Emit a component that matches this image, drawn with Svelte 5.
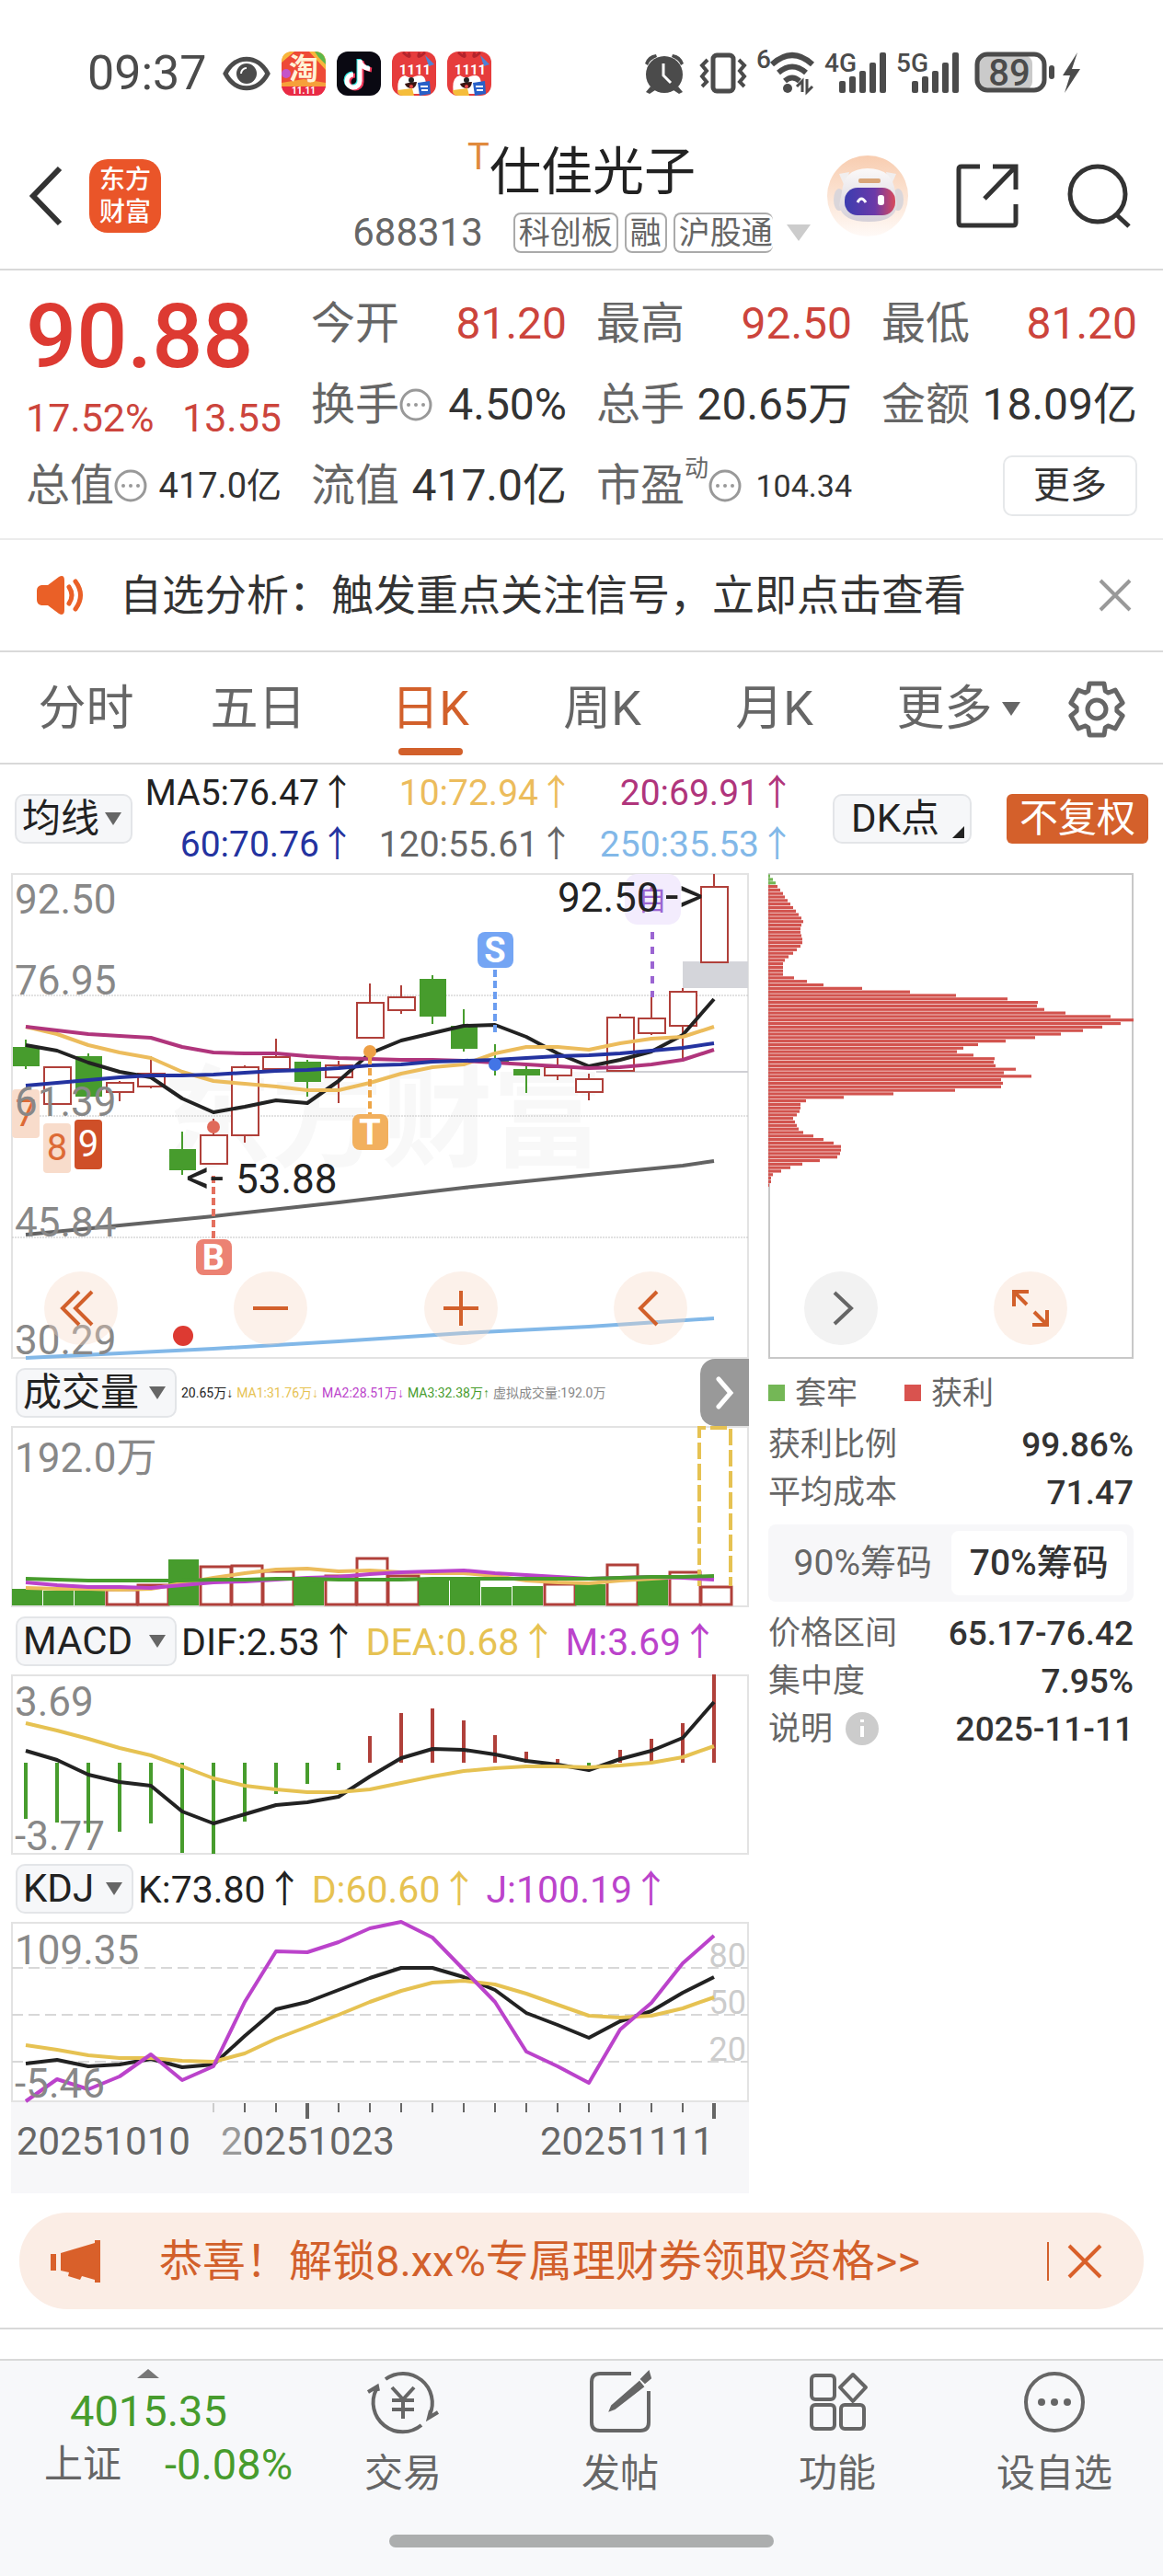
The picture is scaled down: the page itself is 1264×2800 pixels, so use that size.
<script>
    const tabs = ['分时', '五日', '日K', '周K', '月K']
    let activeTab = '日K'
    let chips = '70'

    const averages = [
        { text: 'MA5:76.47', color: '#222' },
        { text: '10:72.94', color: '#ecbc5c' },
        { text: '20:69.91', color: '#b0357c' },
        { text: '60:70.76', color: '#2433a0' },
        { text: '120:55.61', color: '#666' },
        { text: '250:35.53', color: '#82b8e8' }
    ]

    const volumeLegend = [
        { text: '20.65万↓', color: '#222' },
        { text: 'MA1:31.76万↓', color: '#e6c252' },
        { text: 'MA2:28.51万↓', color: '#bb43cb' },
        { text: 'MA3:32.38万↑', color: '#479c2d' },
        { text: '虚拟成交量:192.0万', color: '#888' }
    ]

    const macdLegend = [
        { text: 'DIF:2.53', color: '#222' },
        { text: 'DEA:0.68', color: '#e6c252' },
        { text: 'M:3.69', color: '#bb43cb' }
    ]

    const kdjLegend = [
        { text: 'K:73.80', color: '#222' },
        { text: 'D:60.60', color: '#e6c252' },
        { text: 'J:100.19', color: '#bb43cb' }
    ]

    // up, body top, body bottom, high, low
    const candles = [
        [0, 1138, 1159, 1130, 1162], [1, 1160, 1200, 1160, 1200], [0, 1148, 1192, 1145, 1192],
        [1, 1177, 1187, 1175, 1197], [1, 1167, 1181, 1148, 1183], [0, 1249, 1272, 1230, 1277],
        [1, 1234, 1265, 1216, 1265], [1, 1160, 1234, 1158, 1242], [1, 1149, 1162, 1129, 1162],
        [0, 1154, 1176, 1152, 1192], [1, 1158, 1171, 1153, 1199], [1, 1090, 1128, 1069, 1128],
        [1, 1084, 1098, 1071, 1102], [0, 1064, 1105, 1060, 1113], [0, 1115, 1140, 1097, 1143],
        [0, 1152, 1154, 1135, 1169], [0, 1162, 1169, 1158, 1188], [1, 1160, 1169, 1148, 1174],
        [1, 1173, 1187, 1167, 1196], [1, 1106, 1164, 1102, 1164], [1, 1107, 1123, 1084, 1125],
        [1, 1078, 1115, 1074, 1153], [1, 964, 1046, 950, 1046]
    ]

    const ma5 = [1136, 1142, 1155, 1165, 1171, 1194, 1209, 1203, 1196, 1199, 1175, 1145, 1131, 1123, 1115, 1114, 1127, 1145, 1159, 1152, 1143, 1125, 1086]
    const ma10 = [1116, 1124, 1136, 1144, 1150, 1165, 1175, 1178, 1181, 1185, 1185, 1177, 1167, 1160, 1157, 1145, 1138, 1138, 1141, 1134, 1129, 1127, 1116]
    const ma20 = [1116, 1120, 1124, 1126, 1128, 1138, 1144, 1145, 1145, 1148, 1150, 1151, 1152, 1152, 1153, 1155, 1157, 1159, 1161, 1160, 1157, 1152, 1141]
    const ma60 = [1180, 1177, 1174, 1171, 1169, 1169, 1168, 1166, 1164, 1163, 1161, 1158, 1157, 1154, 1153, 1152, 1150, 1148, 1147, 1145, 1142, 1139, 1134]

    const volumes = [
        [0, 1726], [0, 1728], [0, 1728], [1, 1727], [1, 1722], [0, 1694], [1, 1702], [1, 1701],
        [1, 1707], [0, 1716], [1, 1712], [1, 1693], [1, 1712], [0, 1715], [0, 1715], [0, 1724],
        [0, 1723], [1, 1721], [0, 1721], [1, 1700], [0, 1715], [1, 1708], [1, 1724]
    ]
    const vol1 = [1725, 1726, 1726, 1727, 1726, 1720, 1714, 1709, 1705, 1704, 1707, 1706, 1708, 1709, 1709, 1712, 1717, 1719, 1720, 1717, 1715, 1713, 1714]
    const vol2 = [1719, 1722, 1724, 1724, 1725, 1722, 1719, 1718, 1716, 1714, 1713, 1710, 1708, 1707, 1706, 1709, 1711, 1713, 1715, 1714, 1713, 1714, 1716]
    const vol3 = [1715, 1716, 1717, 1717, 1717, 1717, 1716, 1716, 1715, 1715, 1716, 1716, 1716, 1715, 1715, 1715, 1715, 1715, 1715, 1714, 1713, 1713, 1712]

    const macd = [1976, 1980, 1991, 1990, 1981, 2013, 2014, 1979, 1949, 1938, 1923, 1886, 1861, 1856, 1869, 1885, 1903, 1911, 1921, 1901, 1889, 1872, 1819]
    const dif = [1902, 1912, 1928, 1936, 1940, 1968, 1981, 1971, 1961, 1958, 1952, 1930, 1910, 1900, 1901, 1906, 1913, 1917, 1923, 1911, 1902, 1888, 1849]
    const dea = [1872, 1880, 1889, 1899, 1907, 1919, 1932, 1940, 1944, 1947, 1947, 1944, 1937, 1930, 1924, 1921, 1919, 1919, 1920, 1918, 1915, 1909, 1897]

    const kLine = [2242, 2238, 2245, 2243, 2237, 2246, 2243, 2212, 2183, 2175, 2162, 2149, 2138, 2138, 2148, 2162, 2187, 2200, 2214, 2196, 2185, 2165, 2148]
    const dLine = [2222, 2227, 2233, 2236, 2236, 2239, 2240, 2231, 2215, 2202, 2189, 2175, 2163, 2154, 2152, 2156, 2166, 2178, 2190, 2192, 2190, 2182, 2170]
    const jLine = [2283, 2259, 2270, 2256, 2232, 2260, 2245, 2175, 2120, 2121, 2110, 2095, 2088, 2105, 2140, 2175, 2229, 2245, 2263, 2205, 2176, 2133, 2103]

    const chipBars = [
        2, 5, 8, 10, 13, 16, 18, 21, 24, 27, 30, 33, 36, 38, 36, 35, 35, 36, 37, 37, 35, 31, 27, 22, 18, 16, 16, 16, 16, 28,
        42, 60, 102, 154, 204, 260, 293, 292, 300, 323, 372, 397, 383, 363, 342, 318, 290, 258, 228, 212, 205, 223, 246, 245,
        247, 269, 256, 286, 253, 255, 253, 203, 136, 82, 41, 35, 35, 34, 31, 27, 29, 31, 33, 38, 49, 60, 71, 79, 79, 78, 75,
        56, 37, 24, 14, 5, 3, 3, 1
    ]

    const ticks = Array.from({ length: 17 }, (_, i) => i + 6)

    const x = (i) => 28 + 34 * i
    const line = (ys) => ys.map((y, i) => `${x(i)},${y}`).join(' ')

    const gear = Array.from({ length: 6 }, (_, k) => k * 60 - 90)
        .flatMap((a) => [[a - 25, 22], [a - 16, 29], [a + 16, 29], [a + 25, 22]])
        .map(([a, r]) => `${(r * Math.cos((a * Math.PI) / 180)).toFixed(1)},${(r * Math.sin((a * Math.PI) / 180)).toFixed(1)}`)
        .join(' ')
</script>

<main>
    <div class="status">
        <div class="status-left">
            <time>09:37</time>
            <svg width="52" height="38" viewBox="0 0 52 38">
                <path d="M3 19C14-2 38-2 49 19C38 40 14 40 3 19Z" fill="none" stroke="#4b4b4b" stroke-width="5" />
                <circle cx="26" cy="19" r="11" fill="#4b4b4b" />
                <path d="M20 19a6 6 0 0 1 6-6" fill="none" stroke="#fff" stroke-width="2" />
            </svg>
            <svg width="48" height="48" viewBox="0 0 48 48">
                <rect width="48" height="48" rx="12" fill="#ee4a36" />
                <path d="M0 12L14 0H12Q0 0 0 12ZM30 0H36Q48 0 48 12V20Z" fill="#f8b63b" />
                <path d="M36 0Q48 0 48 14L40 6Z" fill="#5cb84a" />
                <circle cx="5" cy="24" r="5" fill="#c453c9" />
                <path d="M0 34L24 30L48 34V38H0Z" fill="#f6a03a" />
                <path d="M0 38H48Q46 48 36 48H12Q2 48 0 38Z" fill="#e92a45" />
                <text class="tao" x="24" y="30">淘</text>
                <text class="tiny" x="24" y="46">11.11</text>
            </svg>
            <svg width="48" height="48" viewBox="0 0 48 48">
                <rect width="48" height="48" rx="12" fill="#0a0912" />
                <g fill="none" stroke-width="5">
                    <path d="M24 8V31a7 7 0 1 1-7-7M24 9q2 8 11 9" stroke="#35e6e0" />
                    <path d="M27 10V33a7 7 0 1 1-7-7M27 11q2 8 11 9" stroke="#f2385a" />
                    <path d="M25 9V32a7 7 0 1 1-7-7M25 10q2 8 11 9" stroke="#fff" />
                </g>
            </svg>
            {#each [1, 2] as app (app)}
                <svg width="48" height="48" viewBox="0 0 48 48">
                    <rect width="48" height="48" rx="12" fill="#e63c3c" />
                    <path d="M12 1Q22 10 18 1M36 1Q26 10 30 1" stroke="#b3242c" stroke-width="3" fill="none" />
                    <path d="M36 4L46 14L40 16Z" fill="#4e83d6" />
                    <text class="eleven" x="25" y="25">1111</text>
                    <path d="M7 46Q4 28 14 26Q20 30 25 27Q34 24 36 30L40 46Z" fill="#fff" />
                    <path d="M14 35Q20 33 27 33Q26 41 20 40Q15 39 14 35Z" fill="#3a1512" />
                    <circle cx="21" cy="31" r="3" fill="#222" />
                    <circle cx="21" cy="38" r="2" fill="#e94949" />
                    <path d="M28 34L41 32L42 46L30 48Z" fill="#2860c8" />
                    <path d="M31 38h8M32 42h7" stroke="#fff" stroke-width="2" />
                    <path d="M6 42L22 40L24 48H12Q6 48 6 42Z" fill="#f5bd3b" />
                </svg>
            {/each}
        </div>
        <svg class="system" width="476" height="52" viewBox="699 54 476 52">
            <g fill="#4b4b4b">
                <circle cx="722" cy="81" r="20" />
                <path d="M701 69Q704 60 713 59L714 62Q706 65 704 71ZM743 69Q740 60 731 59L730 62Q738 65 740 71Z" />
                <path d="M707 94L712 98L706 102L702 100ZM737 94L732 98L738 102L742 100Z" />
                <path d="M721 69V82L729 90" fill="none" stroke="#fff" stroke-width="3" />
                <rect x="775" y="60" width="22" height="39" rx="4" fill="none" stroke="#4b4b4b" stroke-width="5" />
                <path d="M769 65l-6 6 5 6-5 6 5 6-5 5M803 65l6 6-5 6 5 6-5 6 5 5" fill="none" stroke="#4b4b4b" stroke-width="4" />
                <path d="M839 70Q861 50 883 70M846 79Q861 66 876 79M853 88Q861 81 869 88" fill="none" stroke="#4b4b4b" stroke-width="6" />
                <circle cx="856" cy="96" r="5" />
                <path d="M866 94l6-6v12M877 86v14l6-6" fill="none" stroke="#4b4b4b" stroke-width="3" />
                <text class="net" x="822" y="74">6</text>
                <text class="net" x="896" y="78">4G</text>
                <text class="net" x="974" y="78">5G</text>
                {#each [0, 79] as dx (dx)}
                    <rect x={912 + dx} y="88" width="7" height="13" rx="2" />
                    <rect x={923 + dx} y="83" width="7" height="18" rx="2" />
                    <rect x={934 + dx} y="77" width="7" height="24" rx="2" />
                    <rect x={945 + dx} y="68" width="7" height="33" rx="2" />
                    <rect x={956 + dx} y="57" width="7" height="44" rx="2" />
                {/each}
                <rect x="1062" y="60" width="60" height="38" rx="9" fill="#cacaca" />
                <rect x="1062" y="59" width="73" height="39" rx="11" fill="none" stroke="#4b4b4b" stroke-width="5" />
                <rect x="1140" y="71" width="6" height="15" rx="3" />
                <path d="M1171 57L1155 82H1163L1157 101L1174 75H1165Z" />
                <text class="battery" x="1097" y="93">89</text>
            </g>
        </svg>
    </div>

    <header>
        <div class="head-left">
            <button class="plain" aria-label="返回">
                <svg width="36" height="66" viewBox="0 0 36 66"><path d="M33 3L4 33L33 63" fill="none" stroke="#333" stroke-width="6" /></svg>
            </button>
            <a class="logo" href="#home">东方<br />财富</a>
        </div>
        <div class="title">
            <h1><sup>T</sup>仕佳光子</h1>
            <div class="codes">
                <span class="code">688313</span>
                <span class="tag">科创板</span>
                <span class="tag">融</span>
                <span class="tag open">沪股通</span>
                <svg width="26" height="18" viewBox="0 0 26 18"><path d="M0 0H26L13 18Z" fill="#ccc" /></svg>
            </div>
        </div>
        <div class="head-right">
            <button class="plain avatar" aria-label="智能助手">
                <svg width="88" height="88" viewBox="0 0 88 88">
                    <defs>
                        <linearGradient id="halo" x1="0" y1="0" x2="0" y2="1">
                            <stop offset="0" stop-color="#f8cdb0" />
                            <stop offset="1" stop-color="#fffaf7" />
                        </linearGradient>
                        <linearGradient id="visor" x1="0" y1="0" x2="1" y2="0">
                            <stop offset="0" stop-color="#3b3db0" />
                            <stop offset="0.6" stop-color="#6b3aa8" />
                            <stop offset="1" stop-color="#d84a5c" />
                        </linearGradient>
                        <linearGradient id="shell" x1="0" y1="0" x2="0" y2="1">
                            <stop offset="0" stop-color="#fbf9f9" />
                            <stop offset="1" stop-color="#d5d0d8" />
                        </linearGradient>
                    </defs>
                    <circle cx="44" cy="44" r="44" fill="url(#halo)" />
                    <path d="M13 20L24 18L20 36ZM75 20L64 18L68 36Z" fill="#f1eeee" />
                    <ellipse cx="13" cy="48" rx="6" ry="12" fill="#dad6da" />
                    <ellipse cx="77" cy="48" rx="6" ry="12" fill="#dad6da" />
                    <path d="M16 40Q18 14 44 14Q71 14 74 40L76 54Q74 72 45 72Q16 72 13 54Z" fill="url(#shell)" />
                    <rect x="34" y="25" width="24" height="5" rx="2" fill="#d9a679" />
                    <rect x="19" y="35" width="55" height="30" rx="14" fill="url(#visor)" />
                    <path d="M33 51q4-8 9 0" fill="none" stroke="#fff" stroke-width="3" />
                    <rect x="55" y="43" width="7" height="11" rx="3" fill="#fff" />
                </svg>
            </button>
            <button class="plain share" aria-label="分享">
                <svg width="68" height="70" viewBox="0 0 68 70" fill="none" stroke="#333" stroke-width="5">
                    <path d="M26 3H6Q3 3 3 6V64Q3 67 6 67H62Q65 67 65 64V44M31 38L64 4M40 3H65V28" />
                </svg>
            </button>
            <button class="plain" aria-label="搜索">
                <svg width="70" height="70" viewBox="0 0 70 70" fill="none" stroke="#333" stroke-width="5">
                    <circle cx="34" cy="33" r="30" />
                    <path d="M54 55L68 68" />
                </svg>
            </button>
        </div>
    </header>

    <section class="quote">
        <div class="last">
            <strong>90.88</strong>
            <div><span>17.52%</span><span>13.55</span></div>
        </div>
        <div class="cell"><span>今开</span><b class="red">81.20</b></div>
        <div class="cell"><span>最高</span><b class="red">92.50</b></div>
        <div class="cell"><span>最低</span><b class="red">81.20</b></div>
        <div class="cell"><span>换手{@render dots()}</span><b>4.50%</b></div>
        <div class="cell"><span>总手</span><b>20.65万</b></div>
        <div class="cell"><span>金额</span><b>18.09亿</b></div>
        <div class="cell"><span>总值{@render dots()}</span><b class="mid">417.0亿</b></div>
        <div class="cell"><span>流值</span><b>417.0亿</b></div>
        <div class="cell"><span>市盈<sup>动</sup>{@render dots()}</span><b class="small">104.34</b></div>
        <div class="cell end"><button class="more">更多</button></div>
    </section>

    <section class="notice">
        <svg width="54" height="44" viewBox="0 0 54 44">
            <path d="M0 17Q0 12 5 11H12L24 2Q30-1 30 6V38Q30 45 24 42L12 33H5Q0 32 0 27Z" fill="#ea6027" />
            <path d="M35 13Q41 22 35 31M42 7Q53 22 42 37" fill="none" stroke="#ea6027" stroke-width="5" stroke-linecap="round" />
        </svg>
        <a href="#signal">自选分析：触发重点关注信号，立即点击查看</a>
        <button class="plain" aria-label="关闭提醒">
            <svg width="36" height="36" viewBox="0 0 36 36"><path d="M2 2L34 34M34 2L2 34" stroke="#999" stroke-width="4" /></svg>
        </button>
    </section>

    <nav class="tabs">
        {#each tabs as tab (tab)}
            <button class:active={activeTab === tab} on:click={() => (activeTab = tab)}>{tab}</button>
        {/each}
        <button class="tab-more">更多<svg width="20" height="15" viewBox="0 0 20 15"><path d="M0 0H20L10 15Z" fill="#666" /></svg></button>
        <button aria-label="设置">
            <svg width="64" height="64" viewBox="-32 -32 64 64" fill="none" stroke="#666" stroke-width="5" stroke-linejoin="round">
                <polygon points={gear} />
                <circle r="10" />
            </svg>
        </button>
    </nav>

    <section class="averages">
        <label class="picker">
            <select aria-label="主图指标"><option>均线</option></select>
            {@render caret()}
        </label>
        <div class="values">
            {#each averages as item (item.text)}
                <span style:color={item.color}>{item.text}{@render up()}</span>
            {/each}
        </div>
        <button class="dk">DK点<svg width="13" height="13" viewBox="0 0 13 13"><path d="M13 0V13H0Z" fill="#222" /></svg></button>
        <button class="restore">不复权</button>
    </section>

    <div class="charts">
        <div class="left">
            <div class="plot">
                <svg viewBox="12 949 802 528">
                    <text class="watermark" x="175" y="1259">东方财富</text>
                    <rect class="frame" x="13" y="950" width="800" height="526" />
                    <g stroke="#c4c4c4" stroke-width="1" stroke-dasharray="2 1">
                        <path d="M13 1082H813M13 1213H813M13 1345H813" />
                    </g>
                    <path d="M648 1165H813" stroke="#cfcfd4" stroke-width="2" />
                    <rect x="742" y="1045" width="71" height="29" fill="#d4d5da" />
                    {#each candles as [rise, top, bottom, high, low], i (i)}
                        {#if rise}
                            <path d="M{x(i)} {high}V{top}M{x(i)} {bottom}V{low}" stroke="#b0403a" stroke-width="2" />
                            <rect x={x(i) - 14} y={top} width="29" height={bottom - top} fill="#fff" stroke="#b0403a" stroke-width="2" />
                        {:else}
                            <path d="M{x(i)} {high}V{low}" stroke="#479c2d" stroke-width="2" />
                            <rect x={x(i) - 14} y={top} width="29" height={bottom - top} fill="#479c2d" />
                        {/if}
                    {/each}
                    <rect x="13" y="1184" width="30" height="53" rx="4" fill="#f8dccb" />
                    <rect x="47" y="1221" width="30" height="54" rx="4" fill="#f8dccb" />
                    <rect x="81" y="1217" width="30" height="54" rx="4" fill="#cf4f28" />
                    <text class="nine" x="28" y="1224" fill="#dd6a35">7</text>
                    <text class="nine" x="62" y="1261" fill="#dd6a35">8</text>
                    <text class="nine" x="96" y="1257" fill="#fff">9</text>
                    <g class="lines">
                        <polyline points="28,1342 130,1332 232,1322 368,1307 504,1291 640,1277 742,1267 776,1262" stroke="#636363" />
                        <polyline points="28,1476 232,1466 368,1458 504,1449 640,1442 776,1433" stroke="#82b8e8" />
                        <polyline points={line(ma5)} stroke="#222" />
                        <polyline points={line(ma10)} stroke="#ecbc5c" />
                        <polyline points={line(ma20)} stroke="#b0357c" />
                        <polyline points={line(ma60)} stroke="#2433a0" />
                    </g>
                    <g stroke-width="4" stroke-dasharray="8 4">
                        <path d="M232 1278V1346" stroke="#e4705f" />
                        <path d="M402 1149V1211" stroke="#eda546" />
                        <path d="M538 1054V1122" stroke="#6b9df0" />
                        <path d="M709 1013V1084" stroke="#9b65d2" stroke-dasharray="8 8" />
                    </g>
                    <circle cx="232" cy="1225" r="7" fill="#e06a5a" />
                    <circle cx="402" cy="1143" r="7" fill="#eea046" />
                    <circle cx="538" cy="1157" r="7" fill="#4375e6" />
                    <rect x="213" y="1347" width="39" height="39" rx="8" fill="#ec8273" />
                    <rect x="383" y="1211" width="39" height="39" rx="8" fill="#f2b05e" />
                    <rect x="519" y="1013" width="39" height="39" rx="8" fill="#74a5f4" />
                    <rect x="679" y="950" width="61" height="55" rx="14" fill="#f3ecfd" />
                    <text class="signal" x="232" y="1380">B</text>
                    <text class="signal" x="402" y="1244">T</text>
                    <text class="signal" x="538" y="1046">S</text>
                    <text class="self" x="709" y="989">自</text>
                    <g class="axis">
                        <text x="16" y="993">92.50</text>
                        <text x="16" y="1081">76.95</text>
                        <text x="16" y="1213">61.39</text>
                        <text x="16" y="1344">45.84</text>
                        <text x="16" y="1472">30.29</text>
                        <g fill="#222">
                            <text x="606" y="991">92.50<tspan class="arrow" x="723">-&gt;</tspan></text>
                            <text x="202" y="1297"><tspan class="arrow">&lt;-</tspan><tspan x="256">53.88</tspan></text>
                        </g>
                    </g>
                    <circle cx="199" cy="1452" r="11" fill="#dd3a32" />
                </svg>
                <div class="controls">
                    <button aria-label="最早"><svg viewBox="-40 -40 80 80"><path d="M-2-18L-20 0L-2 18M12-18L-6 0L12 18" /></svg></button>
                    <button aria-label="缩小"><svg viewBox="-40 -40 80 80"><path d="M-19 0H19" /></svg></button>
                    <button aria-label="放大"><svg viewBox="-40 -40 80 80"><path d="M-19 0H19M0-19V19" /></svg></button>
                    <button aria-label="前移"><svg viewBox="-40 -40 80 80"><path d="M7-18L-11 0L7 18" /></svg></button>
                </div>
            </div>

            <div class="legend-row">
                <label class="picker wide">
                    <select aria-label="副图一"><option>成交量</option></select>
                    {@render caret()}
                </label>
                <div class="volume-legend">
                    {#each volumeLegend as item (item.text)}
                        <span style:color={item.color}>{item.text}</span>
                    {/each}
                </div>
                <button class="drawer" aria-label="展开">
                    <svg width="20" height="36" viewBox="0 0 20 36"><path d="M3 3L16 18L3 33" fill="none" stroke="#fff" stroke-width="5" stroke-linecap="round" /></svg>
                </button>
            </div>
            <svg viewBox="12 1549 802 197">
                <rect class="frame" x="13" y="1550" width="800" height="195" />
                {#each volumes as [rise, top], i (i)}
                    {#if rise}
                        <rect x={x(i) - 14} y={top} width="33" height={1743 - top} fill="#fff" stroke="#b0403a" stroke-width="3" />
                    {:else}
                        <rect x={x(i) - 15} y={top} width="33" height={1744 - top} fill="#479c2d" />
                    {/if}
                {/each}
                <path d="M760 1723V1551H794V1723" fill="none" stroke="#e6c252" stroke-width="4" stroke-dasharray="18 5" />
                <g class="lines">
                    <polyline points={line(vol1)} stroke="#ecbc5c" />
                    <polyline points={line(vol2)} stroke="#bb43cb" />
                    <polyline points={line(vol3)} stroke="#479c2d" />
                </g>
                <text class="axis" x="16" y="1599">192.0万</text>
            </svg>

            <div class="legend-row">
                <label class="picker wide">
                    <select aria-label="副图二"><option>MACD</option></select>
                    {@render caret()}
                </label>
                <div class="legend">
                    {#each macdLegend as item (item.text)}
                        <span style:color={item.color}>{item.text}{@render up()}</span>
                    {/each}
                </div>
            </div>
            <svg viewBox="12 1819 802 196">
                <rect class="frame" x="13" y="1820" width="800" height="194" />
                <g class="axis">
                    <text x="16" y="1864">3.69</text>
                    <text x="16" y="2010">-3.77</text>
                </g>
                {#each macd as y, i (i)}
                    <path d="M{x(i)} 1915V{y}" stroke={y > 1915 ? '#479c2d' : '#b0403a'} stroke-width="4" />
                {/each}
                <g class="lines">
                    <polyline points={line(dif)} stroke="#222" />
                    <polyline points={line(dea)} stroke="#e6c252" />
                </g>
            </svg>

            <div class="legend-row">
                <label class="picker">
                    <select aria-label="副图三"><option>KDJ</option></select>
                    {@render caret()}
                </label>
                <div class="legend">
                    {#each kdjLegend as item (item.text)}
                        <span style:color={item.color}>{item.text}{@render up()}</span>
                    {/each}
                </div>
            </div>
            <svg viewBox="12 2088 802 295">
                <rect x="12" y="2284" width="802" height="99" fill="#f7f7f9" />
                <rect class="frame" x="13" y="2089" width="800" height="194" />
                <path d="M13 2138H813M13 2189H813M13 2240H813" stroke="#d8d8d8" stroke-width="2" stroke-dasharray="12 6" />
                <g class="scale">
                    <text x="811" y="2137">80</text>
                    <text x="811" y="2188">50</text>
                    <text x="811" y="2239">20</text>
                </g>
                <g class="lines">
                    <polyline points={line(kLine)} stroke="#222" />
                    <polyline points={line(dLine)} stroke="#e6c252" />
                    <polyline points={line(jLine)} stroke="#bb43cb" />
                </g>
                <g class="axis">
                    <text x="16" y="2134">109.35</text>
                    <text x="16" y="2279">-5.46</text>
                </g>
                {#each ticks as i (i)}
                    <path d="M{x(i)} 2285V{i === 9 || i === 22 ? 2302 : 2295}" stroke={i === 6 ? '#ccc' : '#666'} stroke-width={i === 9 || i === 22 ? 4 : 2} />
                {/each}
                <g class="dates">
                    <text x="18" y="2341">20251010</text>
                    <text x="240" y="2341"><tspan fill="#999">2</tspan>0251023</text>
                    <text x="587" y="2341">20251111</text>
                </g>
            </svg>
        </div>

        <div class="right">
            <div class="plot">
                <svg viewBox="834 949 397 528">
                    <rect x="835" y="950" width="395" height="526" fill="#fff" stroke="#c8c8c8" stroke-width="2" />
                    {#each chipBars as width, i (i)}
                        <rect x="834" y={950.5 + i * 3.82} {width} height="3.2" fill={i < 3 ? '#74b756' : '#d2534e'} />
                    {/each}
                </svg>
                <div class="controls side">
                    <button class="gray" aria-label="收起"><svg viewBox="-40 -40 80 80"><path d="M-7-17L11 0L-7 17" /></svg></button>
                    <button aria-label="全屏"><svg viewBox="-40 -40 80 80"><path d="M-18-2V-18H-2M-18-18L-4-4M18 2V18H2M18 18L4 4" /></svg></button>
                </div>
            </div>
            <div class="chip-legend">
                <span class="green">套牢</span>
                <span>获利</span>
            </div>
            <dl>
                <div><dt>获利比例</dt><dd>99.86%</dd></div>
                <div><dt>平均成本</dt><dd>71.47</dd></div>
            </dl>
            <div class="segment">
                <button class:selected={chips === '90'} on:click={() => (chips = '90')}>90%筹码</button>
                <button class:selected={chips === '70'} on:click={() => (chips = '70')}>70%筹码</button>
            </div>
            <dl>
                <div><dt>价格区间</dt><dd>65.17-76.42</dd></div>
                <div><dt>集中度</dt><dd>7.95%</dd></div>
                <div>
                    <dt>
                        说明
                        <svg width="36" height="36" viewBox="0 0 36 36">
                            <circle cx="18" cy="18" r="18" fill="#ccc" />
                            <path d="M18 15V27M18 8V11" stroke="#fff" stroke-width="4" />
                        </svg>
                    </dt>
                    <dd>2025-11-11</dd>
                </div>
            </dl>
        </div>
    </div>

    <aside class="banner">
        <svg width="54" height="46" viewBox="0 0 54 46" fill="#d9602a">
            <rect y="15" width="6" height="18" />
            <path d="M11 14L48 3V0H54V46H48V43L34 39L32 43L19 39L20 35L11 33Z" />
        </svg>
        <a href="#coupon">恭喜！解锁8.xx%专属理财券领取资格&gt;&gt;</a>
        <button class="plain" aria-label="关闭横幅">
            <svg width="38" height="38" viewBox="0 0 38 38"><path d="M2 2L36 36M36 2L2 36" stroke="#d9602a" stroke-width="4" /></svg>
        </button>
    </aside>

    <footer>
        <div class="bottom-nav">
            <a class="index" href="#index">
                <svg width="24" height="10" viewBox="0 0 24 10"><path d="M12 0L24 10H0Z" fill="#777" /></svg>
                <strong>4015.35</strong>
                <span>上证<em>-0.08%</em></span>
            </a>
            <a href="#trade">
                <svg width="80" height="70" viewBox="-40 -35 80 70" fill="none" stroke="#666" stroke-width="4">
                    <path d="M-19-25A32 32 0 0 1 29 14M20 25A32 32 0 0 1-29-14M-38-11L-28-17L-27-12M38 11L28 17L30 9" />
                    <path d="M-12-16L0-3L12-16M0-3V18M-12-2H12M-12 8H12" />
                </svg>
                交易
            </a>
            <a href="#post">
                <svg width="68" height="70" viewBox="-34 -35 68 70" fill="none" stroke="#666" stroke-width="4">
                    <path d="M12-31H-22Q-31-31-31-22V22Q-31 31-22 31H22Q31 31 31 22V-12" />
                    <path d="M31-33L33-26L27-21L23-25ZM21-22L25-17L-6 7L-11 9L-9 4Z" fill="#666" stroke-width="2" />
                </svg>
                发帖
            </a>
            <a href="#tools">
                <svg width="68" height="70" viewBox="-34 -35 68 70" fill="none" stroke="#666" stroke-width="4">
                    <rect x="-28" y="-29" width="25" height="26" rx="4" />
                    <rect x="-28" y="3" width="25" height="26" rx="4" />
                    <rect x="4" y="3" width="25" height="26" rx="4" />
                    <path d="M17-30L31-16L17-1L3-16Z" stroke-linejoin="round" />
                </svg>
                功能
            </a>
            <a href="#watch">
                <svg width="70" height="70" viewBox="-35 -35 70 70" fill="#666">
                    <circle r="31" fill="none" stroke="#666" stroke-width="4" />
                    <circle cx="-14" r="4" /><circle r="4" /><circle cx="14" r="4" />
                </svg>
                设自选
            </a>
        </div>
        <div class="home-bar"></div>
    </footer>
</main>

{#snippet dots()}
    <svg class="dots" width="36" height="36" viewBox="-18 -18 36 36" fill="#999">
        <circle r="16" fill="none" stroke="#999" stroke-width="3" />
        <circle cx="-8" r="2" /><circle r="2" /><circle cx="8" r="2" />
    </svg>
{/snippet}

{#snippet caret()}
    <svg width="18" height="14" viewBox="0 0 18 14"><path d="M0 0H18L9 14Z" fill="#666" /></svg>
{/snippet}

{#snippet up()}
    <i>↑</i>
{/snippet}

<style>
    :global(body) {
        background: #fff;
    }

    main {
        font-family: Roboto, 'Liberation Sans', 'Noto Sans CJK SC', sans-serif;
        color: #333;
        line-height: 1;
    }

    main * {
        box-sizing: border-box;
    }

    button, select {
        padding: 0;
        border: none;
        background: none;
        font: inherit;
        color: inherit;
        cursor: pointer;
    }

    a {
        color: inherit;
        text-decoration: none;
    }

    svg {
        display: block;
        flex-shrink: 0;
        overflow: visible;
    }

    i, em {
        font-style: normal;
    }

    i {
        font-family: 'Noto Sans CJK SC', sans-serif;
        line-height: 1;
    }

    .status {
        display: flex;
        justify-content: space-between;
        align-items: center;
        height: 134px;
        padding: 25px 89px 0 95px;
    }

    .status-left {
        display: flex;
        align-items: center;
        gap: 12px;
    }

    .status time {
        margin-right: 5px;
        font-size: 52px;
        color: #4b4b4b;
    }

    .tao, .eleven, .tiny, .battery, .nine, .signal, .self {
        text-anchor: middle;
    }

    .tao {
        font-size: 32px;
        font-weight: 700;
        fill: #fff3d6;
    }

    .tiny {
        font-size: 10px;
        font-weight: 700;
        fill: #fff;
    }

    .eleven {
        font-size: 15px;
        font-weight: 700;
        fill: #fff;
    }

    .net {
        font-size: 28px;
        font-weight: 500;
    }

    .battery {
        font-size: 40px;
        font-weight: 500;
    }

    header {
        display: grid;
        grid-template-columns: 1fr auto 1fr;
        align-items: center;
        height: 160px;
        border-bottom: 2px solid #d9d9d9;
    }

    .head-left, .head-right {
        display: flex;
        align-items: center;
    }

    .head-left {
        gap: 29px;
        padding-left: 32px;
    }

    .head-right {
        justify-content: flex-end;
        gap: 52px;
        padding-right: 35px;
    }

    .logo {
        padding: 5px 11px;
        border-radius: 20px;
        background: #ea5529;
        font-size: 28px;
        font-weight: 500;
        line-height: 35px;
        color: #fff;
    }

    .title {
        display: flex;
        flex-direction: column;
        align-items: center;
        gap: 14px;
        padding-top: 6px;
    }

    h1 {
        display: flex;
        margin: 0;
        font-size: 56px;
        font-weight: 400;
        line-height: 60px;
        color: #222;
    }

    h1 sup {
        font-size: 40px;
        line-height: 28px;
        color: #e08a3c;
    }

    .codes {
        display: flex;
        align-items: center;
        gap: 7px;
    }

    .code {
        margin-right: 26px;
        font-size: 42px;
        color: #666;
    }

    .tag {
        padding: 0 4px;
        border: 2px solid #aaa;
        border-radius: 8px;
        font-size: 34px;
        line-height: 40px;
        color: #666;
    }

    .tag.open {
        padding-right: 0;
        border-right: none;
    }

    .codes svg {
        margin-left: 8px;
    }

    .quote {
        display: grid;
        grid-template-columns: repeat(4, 1fr);
        grid-auto-rows: 88px;
        column-gap: 32px;
        padding: 14px 28px 13px;
        border-bottom: 2px solid #ececec;
    }

    .last {
        grid-row: span 2;
        color: #dd3a32;
    }

    .last strong {
        display: block;
        font-size: 97px;
        font-weight: 500;
        line-height: 116px;
    }

    .last div {
        display: flex;
        justify-content: space-between;
        font-size: 43px;
        line-height: 60px;
        color: #cc443c;
    }

    .cell {
        display: flex;
        justify-content: space-between;
        align-items: center;
        font-size: 48px;
        white-space: nowrap;
    }

    .cell span {
        display: flex;
        align-items: center;
        color: #666;
    }

    .cell sup {
        align-self: flex-start;
        font-size: 26px;
        line-height: 10px;
    }

    .cell b {
        font-weight: 400;
    }

    .cell .red {
        color: #cc443c;
    }

    .cell .mid {
        font-size: 38px;
    }

    .cell .small {
        font-size: 34px;
    }

    .cell.end {
        justify-content: flex-end;
    }

    .more {
        width: 146px;
        height: 66px;
        border: 2px solid #e6e8ea;
        border-radius: 10px;
        font-size: 40px;
    }

    .notice {
        display: flex;
        align-items: center;
        height: 122px;
        padding: 0 34px 0 40px;
        border-bottom: 2px solid #d9d9d9;
        font-size: 46px;
    }

    .notice a {
        flex: 1;
        margin-left: 36px;
    }

    .tabs {
        display: grid;
        grid-template-columns: repeat(5, 187fr) 213fr 88fr;
        height: 122px;
        padding: 3px 28px 0 0;
        border-bottom: 2px solid #d9d9d9;
        font-size: 52px;
        color: #666;
    }

    .tabs button {
        display: flex;
        justify-content: center;
        align-items: center;
        position: relative;
    }

    .tabs .tab-more {
        gap: 10px;
    }

    .tabs .active {
        color: #d2602b;
    }

    .tabs .active::after {
        content: '';
        position: absolute;
        bottom: 8px;
        width: 70px;
        height: 8px;
        border-radius: 4px;
        background: #d2602b;
    }

    .averages {
        display: flex;
        align-items: center;
        height: 118px;
        padding: 0 16px;
    }

    .picker {
        display: flex;
        justify-content: space-between;
        align-items: center;
        width: 128px;
        height: 54px;
        padding: 0 10px 0 6px;
        border: 2px solid #e3e5e8;
        border-radius: 10px;
        background: #f6f7f9;
        font-size: 42px;
        color: #222;
    }

    .picker.wide {
        width: 175px;
    }

    .picker select {
        appearance: none;
        line-height: 50px;
    }

    .values {
        display: grid;
        grid-template-columns: 242px 238px 240px;
        font-size: 39px;
        line-height: 56px;
        text-align: right;
    }

    .dk {
        display: flex;
        align-items: flex-end;
        height: 54px;
        margin-left: auto;
        padding: 0 6px 4px 18px;
        border: 2px solid #e3e5e8;
        border-radius: 10px;
        background: #f6f7f9;
        font-size: 42px;
        color: #222;
    }

    .dk svg {
        margin-left: 14px;
    }

    .restore {
        height: 54px;
        margin-left: 38px;
        padding: 0 14px;
        border-radius: 6px;
        background: #d4602b;
        font-size: 42px;
        color: #fff;
    }

    .charts {
        display: grid;
        grid-template-columns: 802fr 397fr;
        gap: 21px;
        padding: 0 32px 0 12px;
    }

    .plot {
        position: relative;
    }

    .frame {
        fill: none;
        stroke: #e3e3e3;
        stroke-width: 2px;
    }

    .lines {
        fill: none;
        stroke-width: 4px;
        stroke-linejoin: round;
    }

    .watermark {
        font-size: 120px;
        font-weight: 700;
        fill: #f8f8f8;
    }

    .axis {
        font-size: 44px;
        fill: #888;
    }

    .arrow {
        font-size: 52px;
    }

    .nine {
        font-size: 40px;
    }

    .signal {
        font-size: 38px;
        font-weight: 700;
        fill: #fff;
    }

    .self {
        font-size: 32px;
        fill: #9b65d2;
    }

    .scale {
        font-size: 36px;
        text-anchor: end;
        fill: #ccc;
    }

    .dates {
        font-size: 42px;
        fill: #666;
    }

    .controls {
        display: flex;
        justify-content: space-between;
        position: absolute;
        right: 0;
        bottom: 15px;
        left: 0;
        padding: 0 67px 0 36px;
    }

    .controls.side {
        justify-content: flex-start;
        gap: 126px;
        padding-left: 39px;
    }

    .controls button {
        width: 80px;
        height: 80px;
        border-radius: 50%;
        background: rgba(247, 215, 195, 0.35);
    }

    .controls path {
        fill: none;
        stroke: #d2602b;
        stroke-width: 4px;
    }

    .controls .gray {
        background: #f2f2f2;
    }

    .controls .gray path {
        stroke: #666;
    }

    .legend-row {
        display: flex;
        align-items: center;
        height: 73px;
        padding-left: 5px;
    }

    .volume-legend {
        display: flex;
        gap: 4px;
        margin-left: 5px;
        font-size: 14px;
        white-space: nowrap;
    }

    .drawer {
        display: flex;
        justify-content: center;
        align-items: center;
        width: 53px;
        height: 73px;
        margin-left: auto;
        border-radius: 16px 0 0 16px;
        background: #999;
    }

    .legend {
        display: flex;
        gap: 9px;
        margin-left: 5px;
        font-size: 41px;
    }

    .chip-legend {
        display: flex;
        gap: 51px;
        height: 67px;
        padding-top: 7px;
        font-size: 34px;
        color: #666;
    }

    .chip-legend span {
        display: flex;
        align-items: center;
        gap: 11px;
    }

    .chip-legend span::before {
        content: '';
        width: 18px;
        height: 18px;
        background: #d9534f;
    }

    .chip-legend .green::before {
        background: #74b756;
    }

    dl {
        margin: 0;
    }

    dl div {
        display: flex;
        justify-content: space-between;
        align-items: center;
        height: 52px;
    }

    dt {
        display: flex;
        align-items: center;
        gap: 14px;
        font-size: 35px;
        color: #666;
    }

    dd {
        margin: 0;
        font-size: 37px;
        font-weight: 500;
    }

    .segment {
        display: grid;
        grid-template-columns: 1fr 1fr;
        margin: 9px 0 8px;
        padding: 7px;
        border-radius: 8px;
        background: #f7f7f9;
        font-size: 39px;
        line-height: 70px;
        color: #666;
    }

    .segment .selected {
        border-radius: 8px;
        background: #fff;
        font-weight: 500;
        color: #333;
    }

    .banner {
        display: flex;
        align-items: center;
        height: 105px;
        margin: 21px 21px 0;
        padding: 0 45px 0 34px;
        border-radius: 52px;
        background: #fbede5;
        font-size: 47px;
        color: #d2602b;
    }

    .banner a {
        flex: 1;
        margin-left: 64px;
    }

    .banner .plain {
        padding: 2px 0 2px 20px;
        border-left: 2px solid #d2602b;
    }

    footer {
        position: relative;
        margin-top: 54px;
        border-top: 2px solid #d9d9d9;
        padding-bottom: 32px;
        background: #f7f8fa;
    }

    footer::before {
        content: '';
        position: absolute;
        top: -36px;
        right: 0;
        left: 0;
        height: 2px;
        background: #d9d9d9;
    }

    .bottom-nav {
        display: grid;
        grid-template-columns: 320fr repeat(4, 236fr);
        height: 189px;
        font-size: 42px;
        color: #666;
    }

    .bottom-nav a {
        display: flex;
        flex-direction: column;
        align-items: center;
        gap: 22px;
        padding-top: 10px;
    }

    .bottom-nav .index {
        align-items: flex-start;
        gap: 0;
        padding: 9px 0 0 48px;
        line-height: 58px;
    }

    .index svg {
        margin: 0 0 7px 101px;
    }

    .index strong {
        margin-left: 28px;
        font-size: 47px;
        font-weight: 400;
        color: #479c2d;
    }

    .index span {
        display: flex;
        gap: 47px;
    }

    .index em {
        font-size: 47px;
        color: #479c2d;
    }

    .home-bar {
        width: 33%;
        height: 14px;
        margin: 0 auto;
        border-radius: 7px;
        background: #acaeae;
    }
</style>
